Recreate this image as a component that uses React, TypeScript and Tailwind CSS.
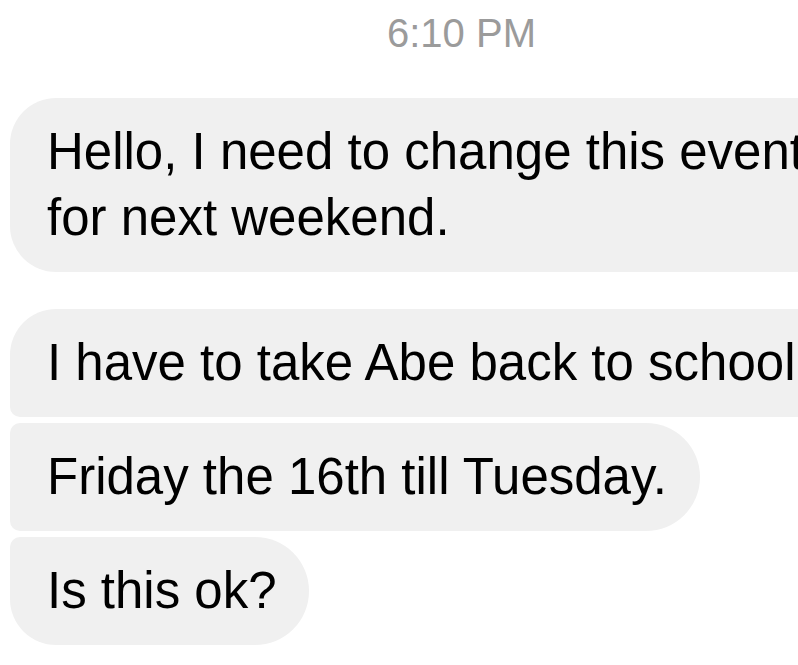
import React from 'react';

type Msg = {
  lines: string[];
  corners: string;
  gap: string;
  pr: string;
};

const messages: Msg[] = [
  { lines: ['Hello, I need to change this event', 'for next weekend.'], corners: 'rounded-[46px]', gap: 'mt-[42px]', pr: 'pr-[80px]' },
  { lines: ['I have to take Abe back to school'], corners: 'rounded-tl-[46px] rounded-bl-[10px] rounded-r-[54px]', gap: 'mt-[37px]', pr: 'pr-[80px]' },
  { lines: ['Friday the 16th till Tuesday.'], corners: 'rounded-l-[10px] rounded-r-[54px]', gap: 'mt-[6px]', pr: 'pr-[33px]' },
  { lines: ['Is this ok?'], corners: 'rounded-tl-[10px] rounded-bl-[46px] rounded-r-[54px]', gap: 'mt-[6px]', pr: 'pr-[32px]' },
];

const Bubble = ({ msg }: { msg: Msg }) => (
  <div className={`${msg.gap} ${msg.corners} ${msg.pr} w-max bg-[#f0f0f0] pl-[37px] py-[21px] text-[51px] leading-[66px] text-black whitespace-nowrap`}>
    {msg.lines.map((line, i) => (
      <div key={i}>{line}</div>
    ))}
  </div>
);

export default function App() {
  return (
    <div
      className="w-[798px] h-[665px] overflow-hidden bg-white"
      style={{ fontFamily: '"Liberation Sans", Arial, sans-serif' }}
    >
      {/* Timestamp */}
      <div className="pt-[10px] pl-[387px] text-[40px] leading-[46px] text-[#9b9b9b]">6:10 PM</div>

      {/* Incoming messages */}
      <div className="flex flex-col pl-[10px]">
        {messages.map((m, i) => (
          <Bubble key={i} msg={m} />
        ))}
      </div>
    </div>
  );
}
